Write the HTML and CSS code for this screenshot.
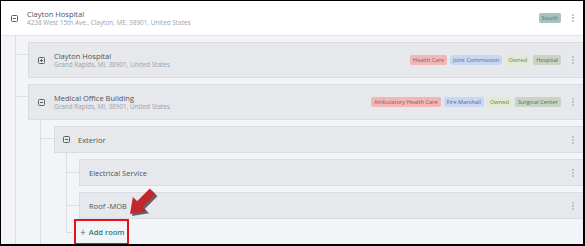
FILE: index.html
```html
<!DOCTYPE html>
<html>
<head>
<meta charset="utf-8">
<link rel="stylesheet" href="styles.css">
</head>
<body>
<div class="frame">
  <div class="node root">
    <div class="card card-top">
      <span class="toggle minus"></span>
      <div class="text">
        <div class="title">Clayton Hospital</div>
        <div class="sub">4238 West 15th Ave., Clayton, ME, 38901, United States</div>
      </div>
      <div class="tags"><span class="tag t-south">South</span></div>
      <span class="more"><i></i><i></i><i></i></span>
    </div>
    <div class="children c1">
      <div class="node">
        <div class="card card-l2">
          <span class="toggle plus"></span>
          <div class="text">
            <div class="title">Clayton Hospital</div>
            <div class="sub">Grand Rapids, MI, 38901, United States</div>
          </div>
          <div class="tags">
            <span class="tag t-red">Health Care</span>
            <span class="tag t-blue">Joint Commission</span>
            <span class="tag t-green">Owned</span>
            <span class="tag t-sage">Hospital</span>
          </div>
          <span class="more"><i></i><i></i><i></i></span>
        </div>
      </div>
      <div class="node">
        <div class="card card-l2">
          <span class="toggle minus"></span>
          <div class="text">
            <div class="title">Medical Office Building</div>
            <div class="sub">Grand Rapids, MI, 38901, United States</div>
          </div>
          <div class="tags">
            <span class="tag t-red">Ambulatory Health Care</span>
            <span class="tag t-blue">Fire Marshall</span>
            <span class="tag t-green">Owned</span>
            <span class="tag t-sage">Surgical Center</span>
          </div>
          <span class="more"><i></i><i></i><i></i></span>
        </div>
        <div class="children c2">
          <div class="node">
            <div class="card card-l3">
              <span class="toggle minus"></span>
              <div class="text"><div class="title">Exterior</div></div>
              <span class="more"><i></i><i></i><i></i></span>
            </div>
            <div class="children c3">
              <div class="node">
                <div class="card card-leaf">
                  <div class="text"><div class="title">Electrical Service</div></div>
                  <span class="more"><i></i><i></i><i></i></span>
                </div>
              </div>
              <div class="node">
                <div class="card card-leaf">
                  <div class="text"><div class="title">Roof -MOB</div></div>
                  <span class="more"><i></i><i></i><i></i></span>
                </div>
              </div>
              <div class="node add">
                <span class="add-box"><span class="add-link"><span class="plus-sign">+</span>Add room</span></span>
              </div>
            </div>
          </div>
        </div>
      </div>
    </div>
  </div>
  <svg class="arrow" width="45" height="40" viewBox="0 0 45 40">
    <g transform="translate(14,32) rotate(135) translate(-32,0)">
      <polygon points="0,-4 18,-4 18,-10 32,0 18,10 18,4 0,4" fill="#4a4a4a" opacity="0.85"/>
    </g>
    <g transform="translate(12,30) rotate(135) translate(-32,0)">
      <polygon points="0,-4 18,-4 18,-10 32,0 18,10 18,4 0,4" fill="#c1272d"/>
    </g>
  </svg>
</div>
</body>
</html>
```
FILE: styles.css
```css
* { box-sizing: border-box; }
html, body { margin: 0; padding: 0; }
body { font-family: "Open Sans", "Liberation Sans", sans-serif; background: #fff; }

.frame {
  position: relative;
  width: 585px;
  height: 246px;
  border-top: 1px solid #000;
  border-left: 1px solid #000;
  border-right: 2px solid #000;
  border-bottom: 2px solid #000;
  background: #f3f4f8;
  overflow: hidden;
}

.node { position: relative; }

.card {
  display: flex;
  align-items: center;
  background: #e6e8eb;
  border: 1px solid #d9dce0;
  border-right: none;
  padding: 0 9px 0 9px;
}
.card-top {
  height: 35px;
  background: #fff;
  border: none;
  border-bottom: 1px solid #e2e4e8;
  padding-left: 10px;
}
.card-l2 { height: 36px; }
.card-l3 { height: 27px; padding-left: 8px; }
.card-leaf { height: 27px; }

.text { flex: 1; min-width: 0; }
.title { font-size: 7.5px; line-height: 10px; color: #4f545a; white-space: nowrap; }
.sub { font-size: 6.4px; line-height: 8px; color: #9ca2a8; white-space: nowrap; }

.toggle {
  position: relative;
  width: 7px;
  height: 7px;
  border: 1px solid #5b6066;
  border-radius: 1.5px;
  margin-right: 9px;
  flex: none;
}
.card-l3 .toggle { margin-right: 8px; }
.toggle::before {
  content: "";
  position: absolute;
  left: 1px; right: 1px; top: 2px;
  height: 1px;
  background: #5b6066;
}
.toggle.plus::after {
  content: "";
  position: absolute;
  top: 1px; bottom: 1px; left: 2px;
  width: 1px;
  background: #5b6066;
}

.tags { display: flex; gap: 3px; }
.tag {
  font-size: 5.7px;
  line-height: 10px;
  height: 10px;
  padding: 0 3px;
  border-radius: 2px;
  white-space: nowrap;
}
.t-south { background: #a8c2c3; color: #557374; font-size: 6px; }
.t-red { background: #f2b6b6; color: #8d5d5d; }
.t-blue { background: #c8d7f3; color: #5d6a86; }
.t-green { background: #e1ebd3; color: #727a66; }
.t-sage { background: #c8d5c5; color: #5d6a5b; }

.more {
  display: flex;
  flex-direction: column;
  gap: 1px;
  margin-left: 11px;
  width: 2px;
  flex: none;
}
.more i { display: block; width: 2px; height: 2px; background: #b3b7bc; border-radius: 1px; }

.children {
  position: relative;
  display: flex;
  flex-direction: column;
  gap: 6px;
  padding-top: 6px;
}
.children::before {
  content: "";
  position: absolute;
  left: 0; top: 0; bottom: 0;
  width: 1px;
  background: #dcdee3;
}
.children > .node::after {
  content: "";
  position: absolute;
  top: 13px;
  height: 1px;
  background: #dcdee3;
}
.c1 { margin-left: 14px; padding-left: 13px; }
.c1 > .node::after { left: -13px; width: 13px; top: 12px; }
.c2 { margin-left: 12px; padding-left: 14px; }
.c2 > .node::after { left: -14px; width: 14px; top: 12px; }
.c3 { margin-left: 12px; padding-left: 13px; }
.c3 > .node::after { left: -13px; width: 13px; }
.c3::before { bottom: 13px; }
.c3 > .node.add::after { top: 13px; width: 7px; }

.add { margin-top: -6px; }
.add-box {
  display: inline-flex;
  align-items: center;
  margin-left: -5px;
  height: 26px;
  width: 55px;
  border: 2px solid #e4121b;
  padding-left: 4px;
  position: relative;
  z-index: 1;
}
.add-link {
  display: flex;
  align-items: center;
  font-size: 7.5px;
  font-weight: 600;
  color: #1b7d86;
  white-space: nowrap;
}
.plus-sign { font-size: 10px; font-weight: 400; margin-right: 3px; line-height: 10px; }

.arrow { position: absolute; left: 117px; top: 183px; }
```
